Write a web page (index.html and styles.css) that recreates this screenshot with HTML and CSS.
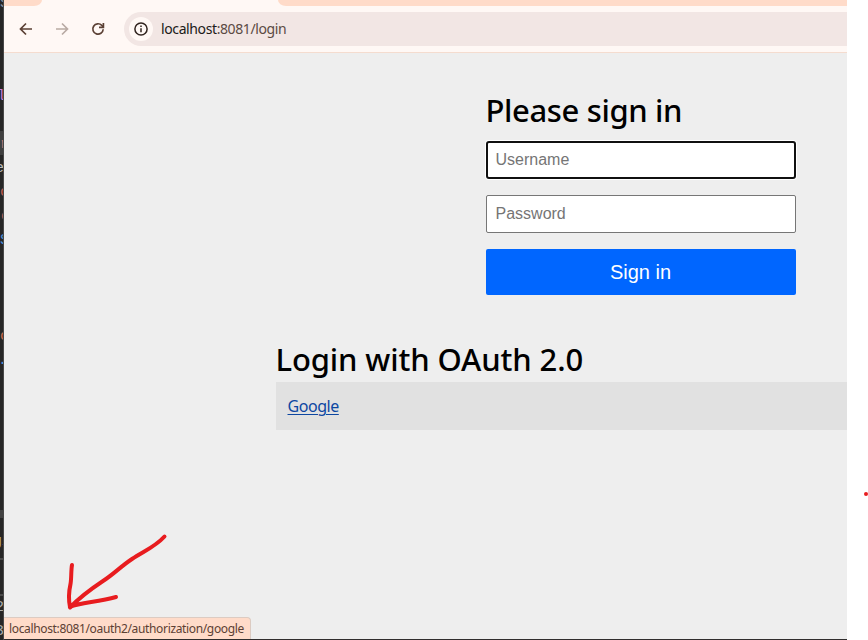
FILE: index.html
```html
<!DOCTYPE html>
<html lang="en">
<head>
<meta charset="utf-8">
<title>Please sign in</title>
<link rel="stylesheet" href="styles.css">
</head>
<body>
<div class="desktop">
  <aside class="editor">
    <div class="line top">S</div>
    <div class="line purple">l</div>
    <div class="line"></div>
    <div class="line active">r</div>
    <div class="line cut">e</div>
    <div class="line red">c</div>
    <div class="line red in">c</div>
    <div class="line blue">S</div>
    <div class="line"></div><div class="line"></div><div class="line"></div>
    <div class="line orange">c</div>
    <div class="line blue dot">.</div>
    <div class="band"></div>
    <div class="line yellow">g<span class="blue">i</span></div>
    <div class="rule first"></div>
    <div class="rule"></div>
    <div class="line num">2</div>
    <div class="line num">3</div>
  </aside>
  <div class="browser">
    <div class="tabs"><span class="tab left"></span><span class="active-tab"></span><span class="tab right"></span></div>
    <nav class="toolbar">
      <svg class="icon" viewBox="0 0 16 16"><path d="M14 8H3M8 2.5 2.5 8 8 13.5"/></svg>
      <svg class="icon muted" viewBox="0 0 16 16"><path d="M2 8h11M8 2.5 13.5 8 8 13.5"/></svg>
      <svg class="icon" viewBox="0 0 16 16"><path d="M13.2 8.3A5.2 5.2 0 1 1 11.8 4.4L13.5 6"/><path d="M13.4 2v4.4H9"/></svg>
      <div class="address">
        <span class="info"><svg viewBox="0 0 16 16"><circle cx="8" cy="8" r="6.1"/><path d="M8 7.2v4M8 4.5v1.5"/></svg></span>
        <span class="url">localhost<span class="path">:8081/login</span></span>
      </div>
    </nav>
    <main class="page">
      <form class="signin">
        <h2><span class="title-one">Please sign in</span></h2>
        <input class="focused" type="text" placeholder="Username">
        <input type="password" placeholder="Password">
        <button type="button">Sign in</button>
      </form>
      <section class="oauth">
        <h2><span class="title-two">Login with OAuth 2.0</span></h2>
        <div class="provider"><a href="#">Google</a></div>
      </section>
    </main>
    <div class="status"><span>localhost:8081/oauth2/authorization/google</span></div>
  </div>
  <svg class="marks" viewBox="0 0 868 640">
    <path d="M164.500 536.500C155 547 144 551 132 559C120 567 114 574 103 581C91 589 79 598 70 607.500M72 565C71 570 71.500 579 70.500 584C68.500 593 68.500 600 70 607C80 602 97 602.500 116 597"/>
    <circle cx="866" cy="494" r="2"/>
  </svg>
</div>
</body>
</html>
```

FILE: styles.css
```css
* { box-sizing: border-box; }
body { margin: 0; background: #fff; font-family: "Noto Sans", sans-serif; overflow: hidden; }
.desktop { position: relative; display: flex; width: 868px; height: 640px; overflow: hidden; }

.editor { width: 4px; height: 640px; flex: none; overflow: hidden; background: #262626; border-right: 1px solid #474747; font: 15px/24px "Liberation Mono", monospace; color: #aaa; }
.line { height: 24px; width: 4px; padding-top: 2px; overflow: hidden; white-space: nowrap; }
.top { height: 14px; margin-bottom: 69px; padding: 0; line-height: 8px; color: #8790a0; }
.purple { color: #c77dda; text-indent: -3px; }
.active { background: #3f3f3f; color: #c77870; }
.cut { color: #bbb; text-indent: -5px; }
.red { color: #bd5b50; }
.in { text-indent: 1px; }
.blue { color: #4b8fd4; }
.dot { text-indent: -2px; }
.orange { color: #c76a4c; }
.band { height: 8px; margin: 139px 0 10px; background: #424242; }
.yellow { color: #b8b083; text-indent: -7px; }
.rule { height: 2px; background: #4a4a4a; }
.rule.first { margin: 6px 0 34px; }
.num { text-indent: -5px; }
.rule + .num { margin-top: -2px; }

.browser { position: relative; width: 843px; height: 640px; flex: none; display: flex; flex-direction: column; overflow: hidden; background: #fff8f5; border-bottom: 1px solid #302d2d; }
.tabs { display: flex; height: 6px; flex: none; background: #fff8f5; }
.tab { background: #ffdbc9; }
.tab.left { width: 38px; border-bottom-right-radius: 8px 6px; }
.active-tab { width: 236px; }
.tab.right { flex: 1; border-bottom-left-radius: 8px 6px; }
.toolbar { display: flex; align-items: center; height: 47px; flex: none; padding: 0 0 1px 14px; border-bottom: 1px solid #f5dccf; }
.icon { width: 16px; height: 16px; margin-right: 20px; fill: none; stroke: #5b4034; stroke-width: 1.7; }
.muted { stroke: #b9aaa3; }
.address { display: flex; align-items: center; flex: 1; height: 34px; margin-left: -2px; padding-left: 5px; border-radius: 17px 0 0 17px; background: #f2e6e4; }
.info { display: flex; align-items: center; justify-content: center; width: 24px; height: 24px; border-radius: 50%; background: #fff8f5; }
.info svg { width: 16px; height: 16px; fill: none; stroke: #30231e; stroke-width: 1.5; }
.url { margin-left: 8px; font-size: 14px; line-height: 20px; letter-spacing: -.39px; color: #201a18; }
.path { color: #5b4a43; }

.page { flex: 1; padding: 39px 0 0 272px; background: #eee; }
.signin { width: 310px; margin-left: 210px; }
h2 { margin: 0; height: 36px; font-size: 31px; line-height: 36px; font-weight: 500; color: #000; white-space: nowrap; }
.title-one { margin-left: -.5px; letter-spacing: -.36px; }
.title-two { margin-left: -.5px; letter-spacing: -.12px; }
input { display: block; width: 310px; height: 38px; margin: 0 0 16px; padding: 0 9px 0 8.500px; border: 1px solid #767676; border-radius: 2px; background: #fff; font: 16px "Liberation Sans", Arial, sans-serif; outline: 0; }
input::placeholder { color: #757575; opacity: 1; }
.focused { margin-top: 13px; padding: 0 8px 0 7.500px; border: 2px solid #101010; border-radius: 3px; box-shadow: 0 0 0 1px #fff; }
button { display: block; width: 310px; height: 46px; padding: 0 1px 0 0; border: 0; border-radius: 2px; background: #06f; color: #fff; font: 20px "Liberation Sans", Arial, sans-serif; }
.oauth { margin-top: 46px; }
.provider { height: 48px; margin-top: 5px; padding: 0 11.500px; background: #e1e1e1; font-size: 16px; line-height: 48px; }
.provider a { color: #0d47a1; letter-spacing: -.45px; text-decoration: underline; text-decoration-thickness: 1px; text-underline-offset: 2px; }

.status { position: absolute; left: 0; bottom: 0; width: 247px; height: 22px; padding-left: 5px; border: solid #dccbc2; border-width: 1px 1px 0 0; border-radius: 0 4px 0 0; background: #ffdbc9; color: #5c4033; font-size: 12px; line-height: 22px; white-space: nowrap; }
.status span { letter-spacing: -.35px; }
.marks { position: absolute; inset: 0; width: 868px; height: 640px; pointer-events: none; }
.marks path { fill: none; stroke: #e81c1f; stroke-width: 4; stroke-linecap: round; stroke-linejoin: round; }
.marks circle { fill: #e81c1f; }
```
